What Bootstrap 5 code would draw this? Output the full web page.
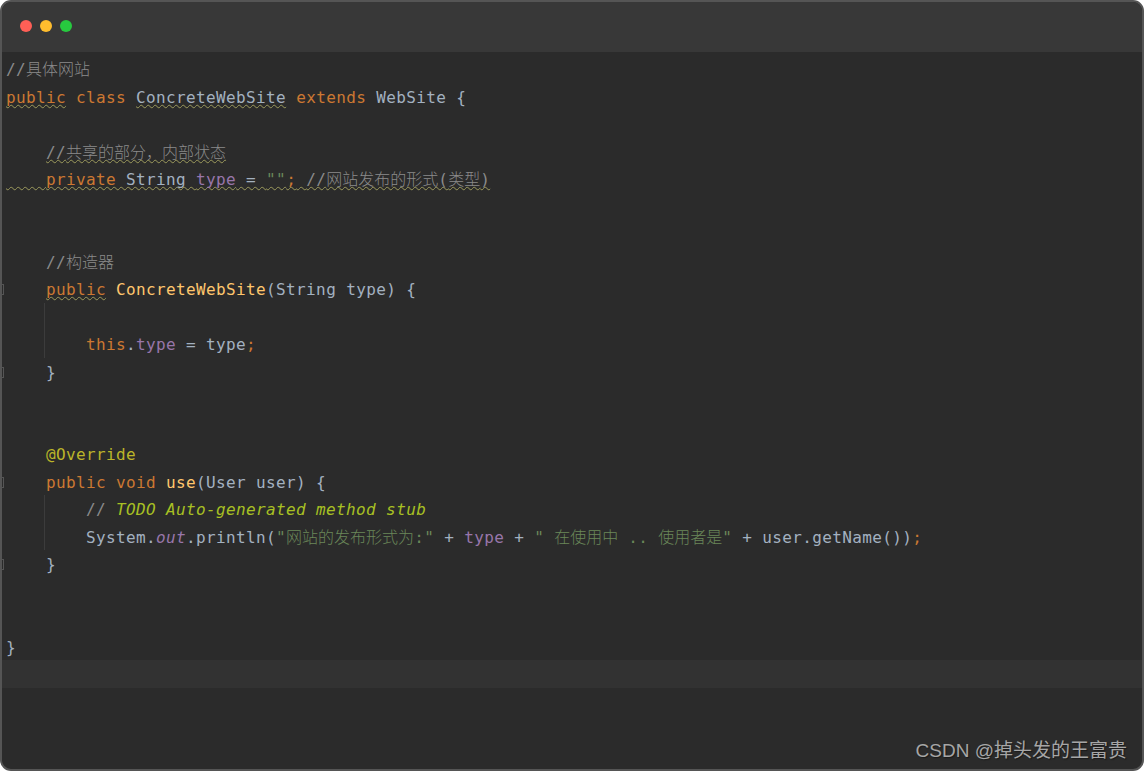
<!DOCTYPE html>
<html lang="zh">
<head>
    <meta charset="UTF-8">
    <meta name="viewport" content="width=device-width, initial-scale=1.0">
    <title>ConcreteWebSite</title>
    <link href="https://cdn.jsdelivr.net/npm/bootstrap@5.3.0/dist/css/bootstrap.min.css" rel="stylesheet">
    <style>
        html, body { height: 100%; background: #fff; }
        .win { height: 771px; background: #2b2b2b; border: 2px solid #555; border-radius: 11px; overflow: hidden; }
        .titlebar { height: 50px; background: #383838; padding: 0 0 2px 18px; }
        .dot { width: 12px; height: 12px; border-radius: 50%; }
        .dot-r { background: #ff5f56; }
        .dot-y { background: #ffbd2e; }
        .dot-g { background: #27c93f; }
        .code { padding-top: 3.4px; font: 16px/27.5px "DejaVu Sans Mono", "Noto Sans CJK SC", monospace; letter-spacing: .37px; color: #a3b1c0; }
        .ln { height: 27.5px; padding: 1px 0 0 4px; white-space: pre; }
        .ln-cur { background: #323232; }
        .zh { font-family: "Noto Sans CJK SC", sans-serif; font-size: 16px; letter-spacing: 0; font-weight: 300; line-height: 0; }
        .k { color: #cc7832; }
        .c { color: #8a8a8a; }
        .p { color: #9876aa; }
        .s { color: #6a8759; }
        .f { color: #ffc66d; }
        .a { color: #bbb529; }
        .t { color: #a8c023; font-style: italic; }
        .i { font-style: italic; }
        .wv { text-decoration: underline wavy #9c9a5c 1px; text-underline-offset: 1px; text-decoration-skip-ink: none; }
        .guide { left: 42px; width: 1px; background: #3c3c3c; }
        .g1 { top: 301px; height: 55px; }
        .g2 { top: 493px; height: 55px; }
        .fold { left: -2px; width: 4px; height: 11px; border: 1px solid #555; }
        .f1 { top: 282px; }
        .f2 { top: 365px; }
        .f3 { top: 475px; }
        .f4 { top: 557px; }
        .wmark { font: 19px/24px "Liberation Sans", "Noto Sans CJK SC", sans-serif; color: #a6a6a6; right: 15px; bottom: 6px; text-shadow: 1px 1px 1px #1a1a1a; }
    </style>
</head>
<body class="m-0">
<div class="win position-relative">
    <div class="titlebar d-flex align-items-center gap-2">
        <span class="dot dot-r"></span>
        <span class="dot dot-y"></span>
        <span class="dot dot-g"></span>
    </div>

    <div class="code">
        <div class="ln"><span class="c">//<span class="zh">具体网站</span></span></div>
        <div class="ln"><span class="k wv">public</span> <span class="k">class</span> <span class="wv">ConcreteWebSite</span> <span class="k">extends</span> WebSite {</div>
        <div class="ln"></div>
        <div class="ln">    <span class="c wv">//<span class="zh">共享的部分，内部状态</span></span></div>
        <div class="ln"><span class="wv">    <span class="k">private</span> String <span class="p">type</span> = <span class="s">""</span><span class="k">;</span> <span class="c">//<span class="zh">网站发布的形式</span>(<span class="zh">类型</span>)</span></span></div>
        <div class="ln"></div>
        <div class="ln"></div>
        <div class="ln">    <span class="c">//<span class="zh">构造器</span></span></div>
        <div class="ln">    <span class="k wv">public</span> <span class="f">ConcreteWebSite</span>(String type) {</div>
        <div class="ln"></div>
        <div class="ln">        <span class="k">this</span>.<span class="p">type</span> = type<span class="k">;</span></div>
        <div class="ln">    }</div>
        <div class="ln"></div>
        <div class="ln"></div>
        <div class="ln">    <span class="a">@Override</span></div>
        <div class="ln">    <span class="k">public void</span> <span class="f">use</span>(User user) {</div>
        <div class="ln">        <span class="c">// </span><span class="t">TODO Auto-generated method stub</span></div>
        <div class="ln">        System.<span class="p i">out</span>.println(<span class="s">"<span class="zh">网站的发布形式为</span>:"</span> + <span class="p">type</span> + <span class="s">" <span class="zh">在使用中</span> .. <span class="zh">使用者是</span>"</span> + user.getName())<span class="k">;</span></div>
        <div class="ln">    }</div>
        <div class="ln"></div>
        <div class="ln"></div>
        <div class="ln">}</div>
        <div class="ln ln-cur"></div>
    </div>

    <span class="guide g1 position-absolute"></span>
    <span class="guide g2 position-absolute"></span>
    <span class="fold f1 position-absolute"></span>
    <span class="fold f2 position-absolute"></span>
    <span class="fold f3 position-absolute"></span>
    <span class="fold f4 position-absolute"></span>
    <span class="wmark position-absolute">CSDN @掉头发的王富贵</span>
</div>
<script src="https://cdn.jsdelivr.net/npm/bootstrap@5.3.0/dist/js/bootstrap.bundle.min.js"></script>
</body>
</html>
